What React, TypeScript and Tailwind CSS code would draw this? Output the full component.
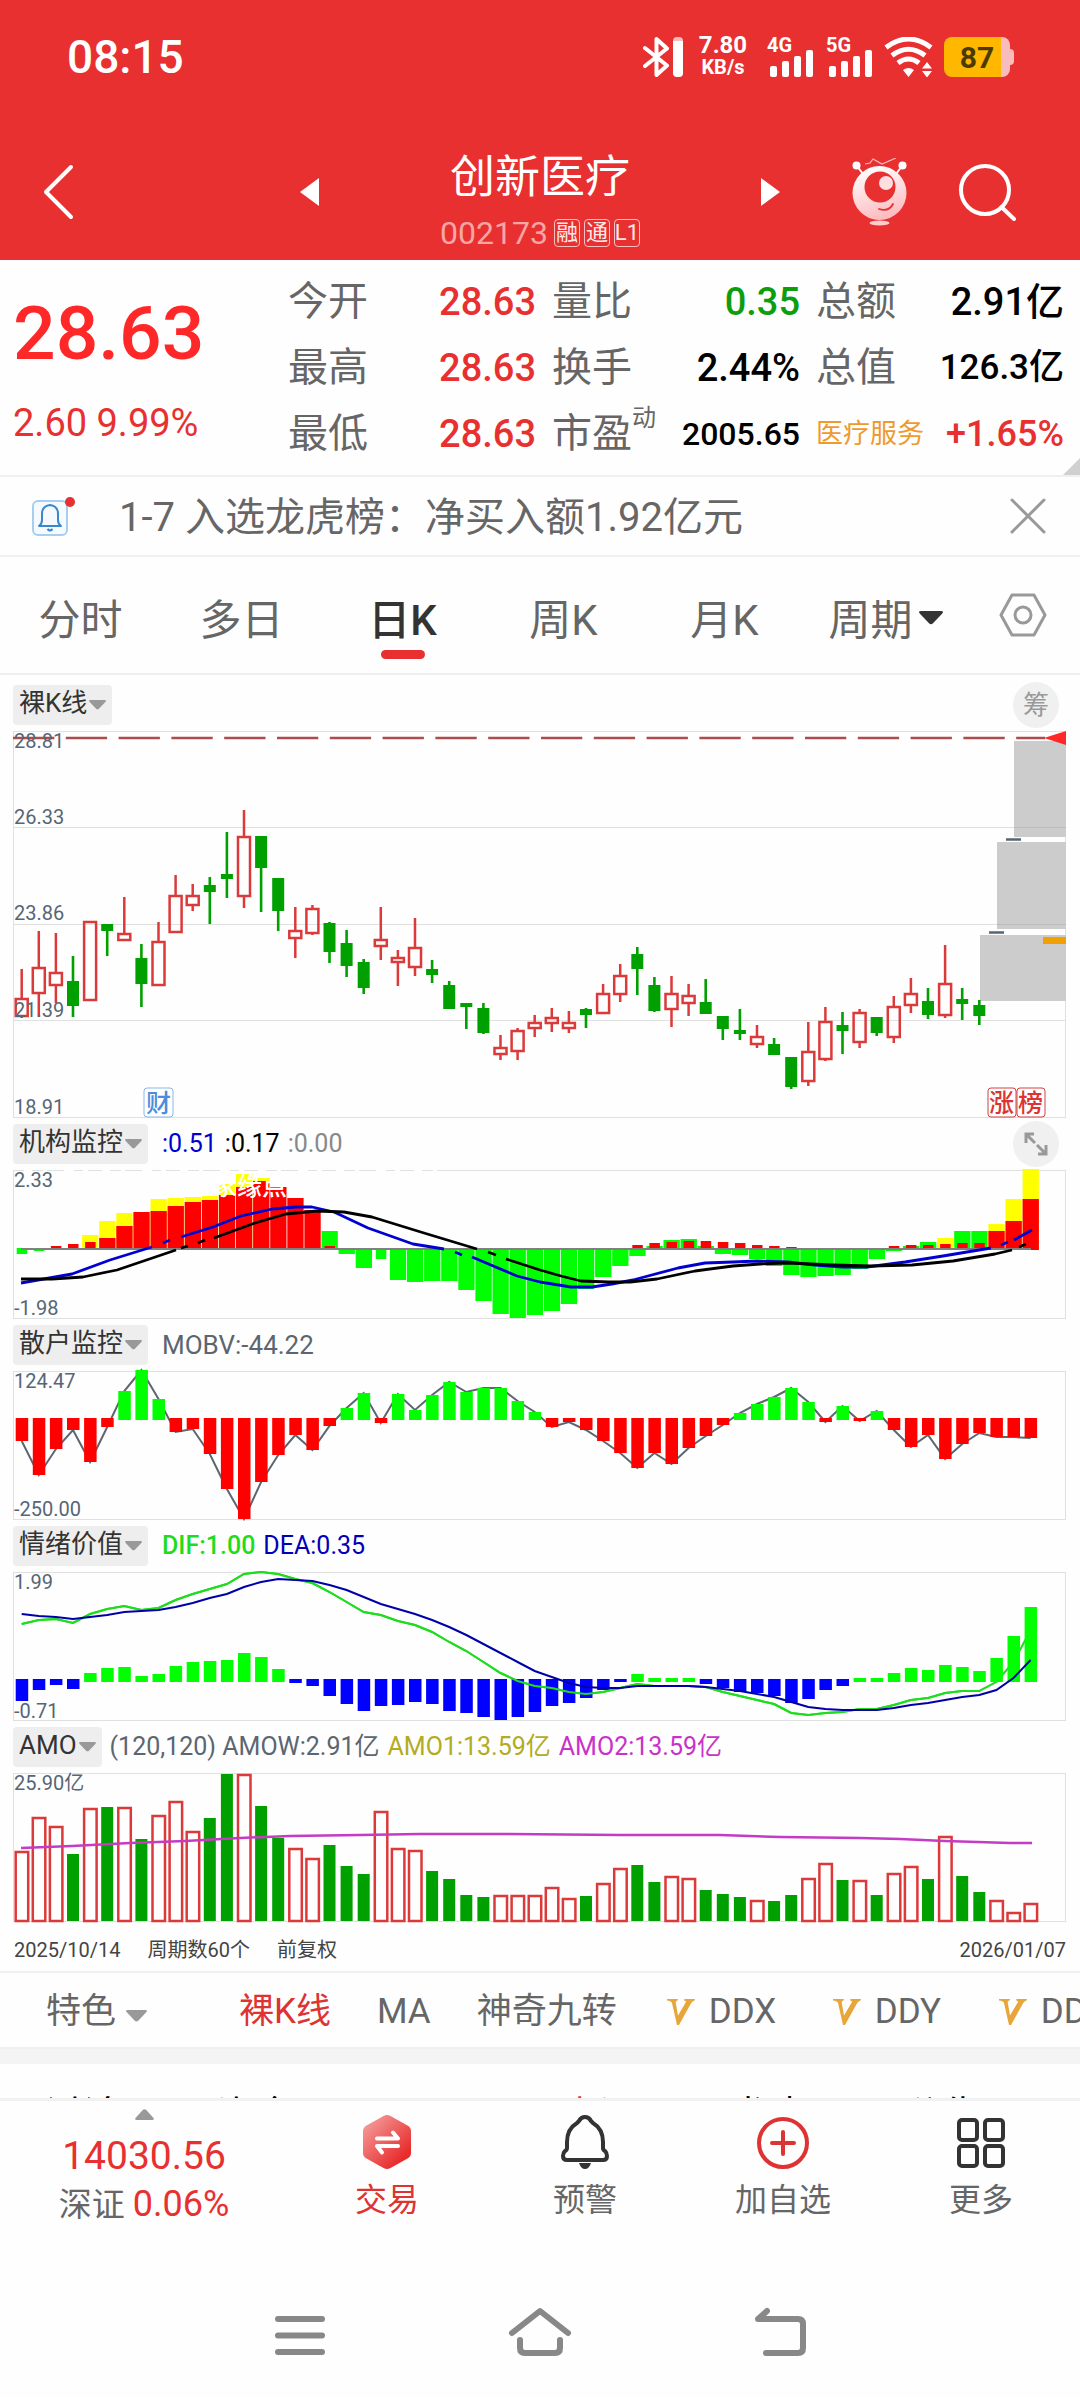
import React from 'react';

type Candle = [string, number, number, number, number];

// [colour, high, body top, body bottom, low]
const candles: Candle[] = [
  ['r', 238, 267, 285, 287], ['r', 200, 236, 262, 286], ['r', 202, 241, 254, 272], ['g', 225, 250, 275, 286],
  ['r', 190, 190, 269, 269], ['g', 193, 193, 200, 225], ['r', 166, 202, 209, 210], ['g', 213, 227, 253, 276],
  ['r', 191, 210, 254, 254], ['r', 144, 164, 201, 201], ['r', 153, 164, 174, 180], ['g', 146, 154, 161, 193],
  ['g', 101, 143, 148, 167], ['r', 79, 105, 165, 177], ['g', 105, 105, 137, 181], ['g', 147, 147, 180, 200],
  ['r', 176, 199, 207, 227], ['r', 174, 177, 202, 204], ['g', 191, 192, 221, 232], ['g', 199, 212, 235, 246],
  ['g', 228, 231, 257, 263], ['r', 176, 208, 215, 229], ['r', 219, 226, 231, 255], ['r', 187, 216, 236, 245],
  ['g', 229, 238, 244, 252], ['g', 250, 254, 278, 278], ['g', 272, 272, 276, 298], ['g', 272, 277, 302, 303],
  ['r', 304, 316, 323, 329], ['r', 297, 299, 320, 329], ['r', 284, 291, 297, 306], ['r', 277, 286, 292, 301],
  ['r', 280, 291, 297, 302], ['g', 277, 278, 284, 297], ['r', 253, 262, 282, 282], ['r', 233, 244, 263, 271],
  ['g', 216, 223, 238, 264], ['g', 246, 254, 280, 281], ['r', 245, 262, 278, 296], ['r', 253, 264, 272, 285],
  ['g', 248, 271, 283, 283], ['g', 285, 285, 298, 309], ['g', 278, 299, 303, 309], ['r', 294, 305, 313, 317],
  ['g', 307, 313, 324, 324], ['g', 326, 326, 356, 358], ['r', 291, 320, 350, 355], ['r', 276, 290, 328, 330],
  ['g', 281, 294, 300, 323], ['r', 278, 281, 311, 317], ['g', 286, 286, 302, 305], ['r', 265, 275, 306, 312],
  ['r', 247, 262, 274, 282], ['g', 257, 270, 284, 288], ['r', 214, 252, 284, 287], ['g', 257, 268, 273, 289],
  ['g', 269, 274, 285, 294],
];

// [index, colour, y, wide]
const flowBars: [number, string, number, boolean][] = [
  [0, 'g', 84, false], [1, 'g', 81, false], [2, 'r', 76, false], [3, 'r', 74, false],
  [4, 'y', 65, true], [4, 'r', 72, false], [5, 'y', 51, true], [5, 'r', 68, true], [6, 'y', 43, true], [6, 'r', 56, true],
  [7, 'r', 42, true], [8, 'y', 29, true], [8, 'r', 41, true], [9, 'y', 28, true], [9, 'r', 36, true],
  [10, 'y', 27, true], [10, 'r', 32, true], [11, 'y', 26, true], [11, 'r', 30, true], [12, 'y', 14, true], [12, 'r', 25, true],
  [13, 'y', 4, true], [13, 'r', 17, true], [14, 'y', 8, true], [14, 'r', 11, true], [15, 'r', 17, true],
  [16, 'r', 28, true], [17, 'r', 40, true], [18, 'g', 61, true], [18, 'r', 76, false], [19, 'g', 84, true],
  [20, 'g', 98, true], [21, 'g', 89, false], [22, 'g', 110, true], [23, 'g', 112, true], [24, 'g', 111, true],
  [25, 'g', 111, true], [26, 'g', 120, true], [27, 'g', 131, true], [28, 'g', 144, true], [29, 'g', 148, true],
  [30, 'g', 145, true], [31, 'g', 141, true], [32, 'g', 134, true], [33, 'g', 119, true], [34, 'g', 107, true],
  [35, 'g', 96, true], [36, 'g', 86, true], [36, 'r', 75, false], [37, 'g', 76, true], [37, 'r', 73, false],
  [38, 'g', 70, true], [38, 'r', 72, false], [39, 'g', 69, true], [39, 'r', 71, false], [40, 'g', 76, true], [40, 'r', 71, false],
  [41, 'g', 84, true], [41, 'r', 72, false], [42, 'g', 85, true], [42, 'r', 73, false], [43, 'g', 89, true], [43, 'r', 75, false],
  [44, 'g', 96, true], [44, 'r', 76, false], [45, 'g', 105, true], [45, 'r', 77, false], [46, 'g', 107, true],
  [47, 'g', 106, true], [48, 'g', 105, true], [49, 'g', 99, true], [50, 'g', 89, true], [51, 'g', 81, true], [51, 'r', 76, false],
  [52, 'g', 76, true], [52, 'r', 75, false], [53, 'g', 72, true], [53, 'r', 75, false], [54, 'y', 68, true], [54, 'r', 74, false],
  [55, 'g', 61, true], [55, 'r', 73, false], [56, 'g', 61, true], [56, 'r', 73, false], [57, 'y', 54, true], [57, 'r', 61, true],
  [58, 'y', 29, true], [58, 'r', 51, true], [59, 'y', -1, true], [59, 'r', 29, true],
];

const retail = [
  70, 104, 78, 59, 91, 56, 20, -1, 28, 61, 58, 83, 118, 148, 111, 84, 64, 79, 55, 37,
  22, 52, 23, 39, 24, 11, 21, 17, 17, 30, 41, 56, 51, 59, 70, 82, 97, 82, 93, 77,
  65, 54, 42, 33, 26, 17, 31, 51, 35, 50, 40, 59, 76, 64, 88, 73, 62, 66, 66, 67,
];

const moodBars = [
  129, 118, 113, 117, 101, 96, 95, 104, 102, 94, 90, 89, 88, 81, 85, 97, 111, 114, 124, 132,
  139, 134, 133, 130, 132, 139, 141, 145, 148, 145, 140, 134, 131, 126, 118, 110, 102, 106, 106, 106,
  112, 116, 120, 121, 124, 131, 127, 118, 114, 106, 106, 101, 96, 98, 93, 95, 99, 86, 64, 35,
];
const dif = [
  52, 48, 47, 51, 42, 37, 34, 38, 36, 28, 22, 17, 12, 2, 0, 2, 7, 11, 20, 30,
  40, 43, 49, 53, 60, 70, 79, 90, 101, 109, 114, 116, 120, 122, 120, 116, 112, 114, 114, 114,
  115, 120, 124, 128, 132, 141, 143, 141, 140, 137, 137, 133, 128, 126, 121, 119, 119, 110, 90, 58,
];
const dea = [
  42, 44, 45, 47, 45, 43, 40, 39, 38, 35, 31, 26, 22, 15, 10, 7, 8, 9, 13, 18,
  25, 32, 37, 42, 48, 55, 63, 72, 81, 90, 99, 105, 111, 115, 116, 116, 114, 114, 114, 114,
  115, 117, 119, 122, 125, 130, 135, 137, 138, 138, 138, 136, 133, 131, 128, 125, 123, 118, 106, 88,
];

const amo = [
  78, 44, 53, 81, 35, 34, 34, 66, 42, 28, 58, 45, 1, 1, 33, 65, 75, 85, 72, 93,
  101, 38, 75, 77, 98, 106, 122, 124, 122, 122, 122, 114, 125, 123, 110, 95, 92, 109, 103, 105,
  117, 121, 124, 127, 128, 122, 105, 90, 107, 107, 122, 100, 93, 106, 63, 103, 119, 127, 139, 130,
];

const cx = (i: number) => 21.7 + i * 17.1;
const points = (ys: number[]) => ys.map((y, i) => `${cx(i)},${y}`).join(' ');
const barColor: Record<string, string> = { r: '#ff0000', g: '#00ff00', y: '#ffff00' };

const AxisText = ({ y, children }: { y: number; children: React.ReactNode }) => (
  <text x="14" y={y} fontSize="20" fill="#566675">{children}</text>
);

const Chart = ({ height, label, children }: { height: number; label: string; children: React.ReactNode }) => (
  <svg viewBox={`0 0 1080 ${height}`} className="block w-full overflow-visible" role="img" aria-label={label}>
    <rect x="13.5" y="0.5" width="1052" height={height - 1} fill="none" stroke="#e0e0e0" />
    {children}
  </svg>
);

const Caret = ({ className }: { className: string }) => (
  <svg viewBox="0 0 18 10" className={className} fill="currentColor">
    <path d="M1.5 0h15q2.5 0 .8 2L10.500 9.200q-1.500 1.300-3 0L.7 2Q-1 0 1.500 0z" />
  </svg>
);

const PanelHeader = ({ name, tall, children }: { name: string; tall?: boolean; children?: React.ReactNode }) => (
  <div className={`flex items-center pl-[13px] pr-[21px] ${tall ? 'h-14 pt-1' : 'h-[52px]'}`}>
    <button className="flex h-10 items-center gap-[2px] rounded-sm bg-[#eeeeee] px-[6px] pb-1 text-[26px] text-[#333]">
      {name}
      <Caret className="mt-1 w-[17px] text-[#999]" />
    </button>
    {children}
  </div>
);

const Bluetooth = () => (
  <svg width="41" height="40" viewBox="0 0 41 40" fill="none">
    <path d="M2 11l22 17.500L13.500 38V2L24 11.500 2 29" stroke="#fff" strokeWidth="4" strokeLinejoin="round" strokeLinecap="round" />
    <rect x="30" y="0" width="10" height="40" rx="4" fill="#f8bcbc" />
    <path d="M30 4h10v32q0 4-5 4t-5-4z" fill="#fff" />
  </svg>
);

const Signal = ({ label }: { label: string }) => (
  <div className="relative h-10 w-[47px]">
    <span className="absolute left-0 top-0 text-[20px] font-bold leading-4">{label}</span>
    <svg width="47" height="40" viewBox="0 0 47 40" fill="#fff">
      <rect x="3" y="29" width="7" height="11" rx="2" />
      <rect x="15" y="24" width="7" height="16" rx="2" />
      <rect x="27" y="19" width="7" height="21" rx="2" />
      <rect x="39" y="13" width="7" height="27" rx="2" />
    </svg>
  </div>
);

const Wifi = () => (
  <svg width="49" height="40" viewBox="0 0 49 40">
    <g fill="none" stroke="#fff" strokeWidth="5">
      <path d="M2 10.500q22.500-17 45 0" />
      <path d="M8 18.500q16.500-12.500 33 0" />
      <path d="M14 26q10.500-8 21 0" />
    </g>
    <path d="M19 33q5.500-4 11 0l-5.500 7zM43 25l5 6.500H38zM38 34h10l-5 6.500z" fill="#fff" />
  </svg>
);

const Mascot = () => (
  <svg width="56" height="68" viewBox="0 0 56 68">
    <defs>
      <linearGradient id="body" x1="0.3" y1="0" x2="0.600" y2="1">
        <stop offset="0" stopColor="#fff" />
        <stop offset="1" stopColor="#fdb9bd" />
      </linearGradient>
    </defs>
    <path d="M13 6l5-1 3-4 9 5 14-6" fill="none" stroke="#fbb" strokeWidth="1.200" />
    <path d="M5 8l6 8M50 8l-6 8" stroke="#fff" strokeWidth="2" />
    <circle cx="4.500" cy="7.500" r="4" fill="#fff" />
    <circle cx="50.500" cy="7.500" r="4" fill="#fff" />
    <circle cx="27.500" cy="35" r="27" fill="url(#body)" />
    <circle cx="28" cy="29" r="15.500" fill="#e83030" />
    <circle cx="34" cy="25" r="7" fill="#fddfe0" />
    <path d="M27 51q10 3 14-5" fill="none" stroke="#e83030" strokeWidth="1.800" strokeLinecap="round" />
    <ellipse cx="27.500" cy="65" rx="10" ry="2.500" fill="#fcc" />
  </svg>
);

const Header = () => (
  <header className="bg-[#e83030] text-white">
    <div className="flex h-[114px] items-center pl-[67px] pr-[66px]">
      <span className="text-[46px] font-medium">08:15</span>
      <div className="ml-auto flex items-center">
        <Bluetooth />
        <div className="ml-[14px] flex w-[50px] flex-col items-center font-bold">
          <span className="text-[24px] leading-5">7.80</span>
          <span className="text-[20px] leading-6">KB/s</span>
        </div>
        <div className="ml-[19px] flex gap-3">
          <Signal label="4G" />
          <Signal label="5G" />
        </div>
        <div className="ml-[11px] mr-[11px]">
          <Wifi />
        </div>
        <div className="flex items-center">
          <div className="flex h-10 w-[66px] items-center justify-center rounded-lg bg-linear-to-r from-[#ffb700] from-86% to-[#f8bcbc] to-86% text-[30px] font-bold text-[#4d3a00]">
            87
          </div>
          <div className="h-4 w-1 rounded-r bg-[#f8bcbc]"></div>
        </div>
      </div>
    </div>
    <div className="grid h-[146px] grid-cols-[1fr_480px_1fr] items-center pt-[10px]">
      <div className="pl-[42px]">
        <button aria-label="返回" className="block">
          <svg width="32" height="56" viewBox="0 0 32 56" fill="none" stroke="#fff" strokeWidth="4" strokeLinecap="round" strokeLinejoin="round">
            <path d="M29 3L4 28l25 25" />
          </svg>
        </button>
      </div>
      <div className="flex items-center justify-between">
        <button aria-label="上一只">
          <svg width="19" height="28" viewBox="0 0 19 28" fill="#fff"><path d="M19 0v28L0 14z" /></svg>
        </button>
        <div className="pt-[2px] text-center">
          <h1 className="text-[45px] leading-[80px]">创新医疗</h1>
          <div className="flex items-center justify-center leading-[30px]">
            <span className="mr-[6px] text-[32px] text-[#f7a5a5]">002173</span>
            <div className="flex gap-1">
              {['融', '通', 'L1'].map((tag) => (
                <span key={tag} className="flex h-7 w-[26px] items-center justify-center rounded-sm border border-[#f9c0c0] text-[22px] text-[#fde8e8]">
                  {tag}
                </span>
              ))}
            </div>
          </div>
        </div>
        <button aria-label="下一只">
          <svg width="19" height="28" viewBox="0 0 19 28" fill="#fff"><path d="M0 0v28l19-14z" /></svg>
        </button>
      </div>
      <div className="flex items-center justify-end gap-[50px] pr-16">
        <button aria-label="助手"><Mascot /></button>
        <button aria-label="搜索">
          <svg width="58" height="58" viewBox="0 0 58 58" fill="none" stroke="#fff" strokeWidth="4" strokeLinecap="round">
            <circle cx="27" cy="27" r="24" />
            <path d="M43.500 44L56 56" />
          </svg>
        </button>
      </div>
    </div>
  </header>
);

const quoteColumns = [
  [
    { label: '今开', value: '28.63', style: 'text-[38px] text-[#e83030]' },
    { label: '最高', value: '28.63', style: 'text-[38px] text-[#e83030]' },
    { label: '最低', value: '28.63', style: 'text-[38px] text-[#e83030]' },
  ],
  [
    { label: '量比', value: '0.35', style: 'text-[38px] text-[#0d9d0d]' },
    { label: '换手', value: '2.44%', style: 'text-[38px] text-black' },
    { label: '市盈', sup: '动', value: '2005.65', style: 'text-[32px] text-black' },
  ],
  [
    { label: '总额', value: '2.91亿', style: 'text-[38px] text-black' },
    { label: '总值', value: '126.3亿', style: 'text-[35px] text-black' },
    { label: '医疗服务', value: '+1.65%', style: 'text-[36px] text-[#e83030]', sector: true },
  ],
];

const Quote = () => (
  <section className="relative grid grid-cols-[259fr_248fr_248fr_248fr] gap-4 border-b-2 border-[#f0f0f0] pb-2 pl-[13px] pr-4 pt-[9px]">
    <div className="text-[#e83030]">
      <div className="pt-3 text-[75px] font-medium leading-[104px] text-[#ff2828]">28.63</div>
      <div className="pt-4 text-[38px] leading-[44px]">2.60 9.99%</div>
    </div>
    {quoteColumns.map((column, index) => (
      <dl key={index}>
        {column.map((item) => (
          <div key={item.label} className="flex h-[66px] items-center justify-between whitespace-nowrap">
            <dt className={item.sector ? 'text-[27px] text-[#ee9a2e]' : 'flex text-[40px] text-[#666]'}>
              {item.label}
              {item.sup && <span className="text-[24px] leading-7">{item.sup}</span>}
            </dt>
            <dd className={`font-medium ${item.style}`}>{item.value}</dd>
          </div>
        ))}
      </dl>
    ))}
    <svg className="absolute bottom-0 right-0" width="17" height="17" viewBox="0 0 17 17">
      <path d="M17 0v17H0z" fill="#d0d0d0" />
    </svg>
  </section>
);

const Notice = () => (
  <div className="flex h-20 items-center border-b-2 border-[#f0f0f0] pl-8 pr-[34px]">
    <svg width="44" height="42" viewBox="0 0 44 42" fill="none">
      <rect x="1" y="6" width="34" height="34" rx="5" stroke="#a9cdee" strokeWidth="2" fill="#f5faff" />
      <path d="M7 31h22q-3-2-3-6v-6q0-8-8-9-8 1-8 9v6q0 4-3 6zM15.500 34q2.500 3 5 0" stroke="#3a86cf" strokeWidth="2" strokeLinejoin="round" />
      <circle cx="38" cy="7" r="5" fill="#e83030" />
    </svg>
    <p className="ml-[43px] pt-1 text-[40px] text-[#666]">1-7 入选龙虎榜：净买入额1.92亿元</p>
    <button aria-label="关闭" className="ml-auto">
      <svg width="36" height="36" viewBox="0 0 36 36" stroke="#999" strokeWidth="3" strokeLinecap="round">
        <path d="M2 2l32 32M34 2L2 34" />
      </svg>
    </button>
  </div>
);

const periods = ['分时', '多日', '日K', '周K', '月K', '周期'];

const PeriodTabs = () => (
  <nav className="flex h-[118px] items-center border-b-2 border-[#f0f0f0]">
    {periods.map((period) => (
      <button
        key={period}
        className={`relative flex h-full flex-1 items-center justify-center pt-[10px] text-[42px] ${period === '日K' ? 'font-medium text-[#333]' : 'text-[#666]'}`}
      >
        {period}
        {period === '周期' && <Caret className="mb-1 ml-[6px] w-6 text-[#333]" />}
        {period === '日K' && <span className="absolute bottom-[14px] h-[9px] w-11 rounded-full bg-[#e83030]"></span>}
      </button>
    ))}
    <button aria-label="设置" className="flex w-[114px] justify-center">
      <svg width="48" height="44" viewBox="0 0 48 44" fill="none" stroke="#999" strokeWidth="3" strokeLinejoin="round">
        <path d="M13 2h22l11 20-11 20H13L2 22z" />
        <circle cx="24" cy="22" r="8" />
      </svg>
    </button>
  </nav>
);

const PriceChart = () => (
  <Chart height={387} label="日K线">
    <path d="M14 96.500h1052M14 193.500h1052M14 289.500h1052" stroke="#e0e0e0" />
    <path d="M13 7h1032" stroke="#ad4c4c" strokeWidth="2.500" strokeDasharray="41.300 11.500" />
    <path d="M1014 10h52v96h-52zM997 111h69v87h-69zM980 204h86v66h-86z" fill="#cccccc" />
    <path d="M1014 96.500h52M997 193.500h69" stroke="#bbb" />
    <path d="M1006 108.500h15M989 201.500h15" stroke="#566675" strokeWidth="2.500" />
    <path d="M1043 206h23v7h-23z" fill="#f0a000" />
    <path d="M1044 7l22-7v14z" fill="#ff2828" />
    {candles.map(([color, high, top, bottom, low], i) =>
      color === 'g' ? (
        <g key={i} fill="#00a000">
          <rect x={cx(i) - 1.3} y={high} width="2.600" height={low - high} />
          <rect x={cx(i) - 6} y={top} width="12" height={bottom - top} />
        </g>
      ) : (
        <g key={i} fill="none" stroke="#dc3a3a" strokeWidth="2.500">
          <path d={`M${cx(i)} ${high}V${top}M${cx(i)} ${bottom}V${low}`} />
          <rect x={cx(i) - 6} y={top + 1} width="12" height={bottom - top - 1} />
        </g>
      )
    )}
    <AxisText y={17}>28.81</AxisText>
    <AxisText y={93}>26.33</AxisText>
    <AxisText y={189}>23.86</AxisText>
    <AxisText y={286}>21.39</AxisText>
    <AxisText y={383}>18.91</AxisText>
    <rect x="144" y="357" width="29" height="29" rx="3" fill="#fff" stroke="#8ab8e6" />
    <text x="146" y="381" fontSize="25" fontWeight="500" fill="#4a8edb">财</text>
    <g fill="#fff" stroke="#d04040">
      <rect x="988" y="357" width="28" height="29" rx="3" />
      <rect x="1017" y="357" width="28" height="29" rx="3" />
    </g>
    <g fontSize="25" fontWeight="500" fill="#dd3333">
      <text x="989" y="381">涨</text>
      <text x="1018" y="381">榜</text>
    </g>
  </Chart>
);

const FlowChart = () => (
  <Chart height={149} label="机构监控">
    {flowBars.map(([i, color, y, wide], key) => (
      <rect
        key={key}
        x={cx(i) - (wide ? 8 : 5)}
        y={Math.min(y, 78)}
        width={wide ? 16.300 : 10.500}
        height={Math.abs(y - 78) + (y < 78 ? 2 : 0)}
        fill={barColor[color]}
      />
    ))}
    <path d="M21 79h1010" stroke="#808080" strokeWidth="2" />
    <g fill="none" strokeWidth="2.800" strokeLinejoin="round">
      <path
        stroke="#0000d0"
        d="M21 113L72 104 110 90 152 77M163 73l7-3M181 67L213 57 241 46 272 39 296 37 312 37 334 42 368 58 413 74 444 79M455 82l7 3M472 87L517 106 540 112 571 117 592 117 612 114 633 110 678 98 705 93 733 92 757 91 788 92 815 95 843 97 867 97 905 92 943 86 991 78M1001 75l7-3M1014 70L1032 60"
      />
      <path
        stroke="#000"
        d="M21 109L52 109 83 107 117 100 176 80M181 78l7-2M198 73l7-3M214 68L255 53 286 44 317 41 344 42 372 47 424 63 477 79M488 82l8 3M506 89L540 100 561 106 581 111 609 112 630 112 657 109 695 101 733 96 760 94 788 93 833 95 871 96 912 95 953 91 995 84 1012 80M1019 77l7-3"
      />
    </g>
    {/* white hint text and its clipped first row over the frame */}
    <path d="M24 .5h418" stroke="#fefefe" strokeWidth="2" strokeDasharray="8 11 4 17 10 9 5 14" />
    <text x="212" y="25" fontSize="25" fontWeight="500" fill="#fff">家缘点</text>
    <AxisText y={17}>2.33</AxisText>
    <AxisText y={145}>-1.98</AxisText>
  </Chart>
);

const RetailChart = () => (
  <Chart height={149} label="散户监控">
    <polyline points={points(retail)} fill="none" stroke="#5b6670" strokeWidth="2" />
    {retail.map((y, i) => (
      <rect key={i} x={cx(i) - 6} y={y > 48 ? 47 : y} width="12.500" height={y > 48 ? y - 47 : 49 - y} fill={y > 48 ? '#ff0000' : '#00ff00'} />
    ))}
    <AxisText y={17}>124.47</AxisText>
    <AxisText y={145}>-250.00</AxisText>
  </Chart>
);

const MoodChart = () => (
  <Chart height={149} label="情绪价值">
    {/* the DIF line runs behind the last green bars */}
    <polyline points={points(dif)} fill="none" stroke="#1fdc1f" strokeWidth="2" />
    {moodBars.map((y, i) => (
      <rect key={i} x={cx(i) - 6} y={y > 108 ? 107 : y} width="12.500" height={y > 108 ? y - 107 : 110 - y} fill={y > 108 ? '#0000ff' : '#00ff00'} />
    ))}
    <polyline points={points(dif.slice(0, 57))} fill="none" stroke="#1fdc1f" strokeWidth="2" />
    <polyline points={points(dea)} fill="none" stroke="#0000a8" strokeWidth="2" />
    <AxisText y={17}>1.99</AxisText>
    <AxisText y={146}>-0.71</AxisText>
  </Chart>
);

const AmoChart = () => (
  <Chart height={149} label="AMO">
    {amo.map((y, i) =>
      candles[i]?.[0] === 'g' ? (
        <rect key={i} x={cx(i) - 6} y={y} width="12" height={148 - y} fill="#00a000" />
      ) : (
        <rect key={i} x={cx(i) - 6} y={y + 1} width="12.500" height={147 - y} fill="none" stroke="#dc3a3a" strokeWidth="2.500" />
      )
    )}
    <path
      d="M21 75L72 73 130 70 185 68 240 65 290 63 360 62 420 61 500 61 620 62 720 62 780 64 860 65 900 66 945 68 1010 70 1032 70"
      fill="none"
      stroke="#c43cc4"
      strokeWidth="2.500"
    />
    <AxisText y={17}>25.90亿</AxisText>
  </Chart>
);

const circleButton = 'ml-auto flex h-[46px] w-[46px] items-center justify-center rounded-full bg-[#f0f0f0] text-[#999]';

const Charts = () => (
  <main>
    <PanelHeader name="裸K线" tall>
      <button className={`${circleButton} text-[26px]`}>筹</button>
    </PanelHeader>
    <PriceChart />
    <PanelHeader name="机构监控">
      <p className="ml-[14px] flex gap-2 text-[25px]">
        <span className="text-[#0000d0]">:0.51</span>
        <span className="text-black">:0.17</span>
        <span className="text-[#888]">:0.00</span>
      </p>
      <button aria-label="全屏" className={circleButton}>
        <svg width="24" height="24" viewBox="0 0 24 24" fill="none" stroke="#999" strokeWidth="3">
          <path d="M10 2H2v9M2 2l9 9M14 22h8v-9M22 22l-9-9" />
        </svg>
      </button>
    </PanelHeader>
    <FlowChart />
    <PanelHeader name="散户监控">
      <p className="ml-[14px] text-[26px] text-[#5b6670]">MOBV:-44.22</p>
    </PanelHeader>
    <RetailChart />
    <PanelHeader name="情绪价值">
      <p className="ml-[14px] flex gap-2 text-[25px]">
        <span className="font-medium text-[#1fdc1f]">DIF:1.00</span>
        <span className="text-[#0000b8]">DEA:0.35</span>
      </p>
    </PanelHeader>
    <MoodChart />
    <PanelHeader name="AMO">
      <p className="ml-2 flex gap-2 text-[25px] text-[#5b6670]">
        <span>(120,120) AMOW:2.91亿</span>
        <span className="text-[#b3ab20]">AMO1:13.59亿</span>
        <span className="text-[#c832c8]">AMO2:13.59亿</span>
      </p>
    </PanelHeader>
    <AmoChart />
    <div className="flex h-[49px] items-center gap-[27px] pl-[14px] pr-[14px] pt-[6px] text-[20px] text-[#444]">
      <span>2025/10/14</span>
      <span>周期数60个</span>
      <span>前复权</span>
      <span className="ml-auto">2026/01/07</span>
    </div>
  </main>
);

const GoldV = () => (
  <svg width="28" height="26" viewBox="0 0 28 26" fill="#e8a53a">
    <path d="M0 0h11l-.5 1.500q-2 .3-1.800 2l2.300 13L19 3q.3-1.300-2-1.500L17.500 0H28l-.5 1.500q-2 .5-3.300 2.500L12 26h-2L5 4Q4.500 2 0 1.500z" />
  </svg>
);

const IndicatorTabs = () => (
  <div className="flex h-[78px] items-center overflow-hidden whitespace-nowrap border-y-2 border-[#f0f0f0] pl-[46px] pt-1 text-[35px] text-[#666]">
    <button className="flex items-center gap-[10px]">
      特色
      <Caret className="mt-2 w-[21px] text-[#999]" />
    </button>
    <div className="ml-[46px] mr-[46px] h-[41px] w-px bg-[#e8e8e8]"></div>
    <div className="flex items-center gap-[46px]">
      <button className="text-[#dd3333]">裸K线</button>
      <button>MA</button>
      <button>神奇九转</button>
      {['DDX', 'DDY', 'DDZ'].map((name) => (
        <button key={name} className="flex w-[120px] shrink-0 items-center gap-[14px] pl-1">
          <GoldV />
          {name}
        </button>
      ))}
    </div>
  </div>
);

const newsTabs = [
  { name: '讨论', style: 'text-black' },
  { name: '资金', style: 'text-black' },
  { name: '', style: '' },
  { name: '点评', style: 'text-[#e83030]' },
  { name: '龙虎', style: 'text-black' },
  { name: '公告', style: 'text-black' },
  { name: '财务', style: 'text-black' },
];

const NewsTabs = () => (
  <div className="flex h-[34px] items-start gap-24 overflow-hidden whitespace-nowrap pl-[45px] pt-[26px] text-[38px] leading-[50px]">
    {newsTabs.map((tab, index) => (
      <span key={index} className={`w-[76px] shrink-0 ${tab.style}`}>{tab.name}</span>
    ))}
  </div>
);

const actions = [
  {
    name: '交易',
    color: 'text-[#dd3333]',
    icon: (
      <svg width="54" height="56" viewBox="0 0 54 56">
        <defs>
          <linearGradient id="trade" x1="0" y1="0" x2="0.900" y2="1">
            <stop offset="0.100" stopColor="#f49a9a" />
            <stop offset="0.850" stopColor="#e82c2c" />
          </linearGradient>
        </defs>
        <path d="M23.500 2q3.500-2 7 0l17 9.500q3.500 2 3.500 5.500v22q0 3.500-3.500 5.500l-17 9.500q-3.500 2-7 0l-17-9.500Q3 42.500 3 39V17q0-3.500 3.500-5.500z" fill="url(#trade)" />
        <path d="M17 24.500h21l-5-6M38 32H17l5 6.500" fill="none" stroke="#fff" strokeWidth="4" strokeLinecap="round" strokeLinejoin="round" />
      </svg>
    ),
  },
  {
    name: '预警',
    color: 'text-[#666]',
    icon: (
      <svg width="54" height="56" viewBox="0 0 54 56" fill="none" stroke="#333" strokeWidth="4" strokeLinejoin="round">
        <path d="M27 3q-4 0-6 4l-2 2Q9 15 9 28v6q0 2-2 3-2 2-2 5 0 4 4 4h36q4 0 4-4 0-3-2-5-2-1-2-3v-6q0-13-10-19l-2-2q-2-4-6-4z" />
        <path d="M21 49h12q-2 6-6 6t-6-6z" fill="#333" stroke="none" />
      </svg>
    ),
  },
  {
    name: '加自选',
    color: 'text-[#666]',
    icon: (
      <svg width="54" height="56" viewBox="0 0 54 56" fill="none" stroke="#dd3333" strokeWidth="4" strokeLinecap="round">
        <circle cx="27" cy="29" r="24" />
        <path d="M27 18v22M16 29h22" />
      </svg>
    ),
  },
  {
    name: '更多',
    color: 'text-[#666]',
    icon: (
      <svg width="54" height="56" viewBox="0 0 54 56" fill="none" stroke="#333" strokeWidth="4">
        <rect x="5" y="6" width="18" height="20" rx="3" />
        <rect x="31" y="6" width="18" height="20" rx="3" />
        <rect x="5" y="32" width="18" height="20" rx="3" />
        <rect x="31" y="32" width="18" height="20" rx="3" />
      </svg>
    ),
  },
];

const ActionBar = () => (
  <div className="flex h-[155px] border-t-[3px] border-[#f1f1f1]">
    <button className="flex w-[288px] flex-col items-center pt-2 text-[#e83030]">
      <svg width="19" height="11" viewBox="0 0 19 11" fill="#999"><path d="M8 .8q1.500-1.300 3 0L18.500 9q1 2-1 2h-16q-2 0-1-2z" /></svg>
      <span className="mt-[14px] text-[39px] leading-[44px]">14030.56</span>
      <span className="mt-[2px] text-[36px] leading-[48px]">
        <span className="mr-2 text-[33px] text-[#666]">深证</span>
        0.06%
      </span>
    </button>
    {actions.map((action) => (
      <button key={action.name} className={`flex flex-1 flex-col items-center pt-[13px] text-[32px] leading-[60px] ${action.color}`}>
        {action.icon}
        {action.name}
      </button>
    ))}
  </div>
);

const SystemNav = () => (
  <div className="mx-auto grid h-[145px] w-2/3 grid-cols-3 items-start justify-items-center pt-[54px]">
    <button aria-label="最近任务">
      <svg width="52" height="50" viewBox="0 0 52 50" stroke="#888" strokeWidth="6" strokeLinecap="round">
        <path d="M4 12h44M4 28.500h44M4 45h44" />
      </svg>
    </button>
    <button aria-label="主页">
      <svg width="64" height="50" viewBox="0 0 64 50" fill="none" stroke="#888" strokeWidth="6" strokeLinecap="round" strokeLinejoin="round">
        <path d="M4 26L32 4l28 22" />
        <path d="M12 33v8q0 5 5 5h30q5 0 5-5v-8" />
      </svg>
    </button>
    <button aria-label="后退">
      <svg width="54" height="50" viewBox="0 0 54 50" fill="none" stroke="#888" strokeWidth="6" strokeLinecap="round" strokeLinejoin="round">
        <path d="M13 46h32q5 0 5-5V17q0-5-5-5H5l9-8" />
      </svg>
    </button>
  </div>
);

const App: React.FC = () => {
  return (
    <div className="bg-[#fefefe] font-[Roboto,'Noto_Sans_CJK_SC',sans-serif]">
      <Header />
      <Quote />
      <Notice />
      <PeriodTabs />
      <Charts />
      <IndicatorTabs />
      <div className="h-[15px] bg-[#f4f4f4]"></div>
      <NewsTabs />
      <ActionBar />
      <SystemNav />
    </div>
  );
};

export default App;
